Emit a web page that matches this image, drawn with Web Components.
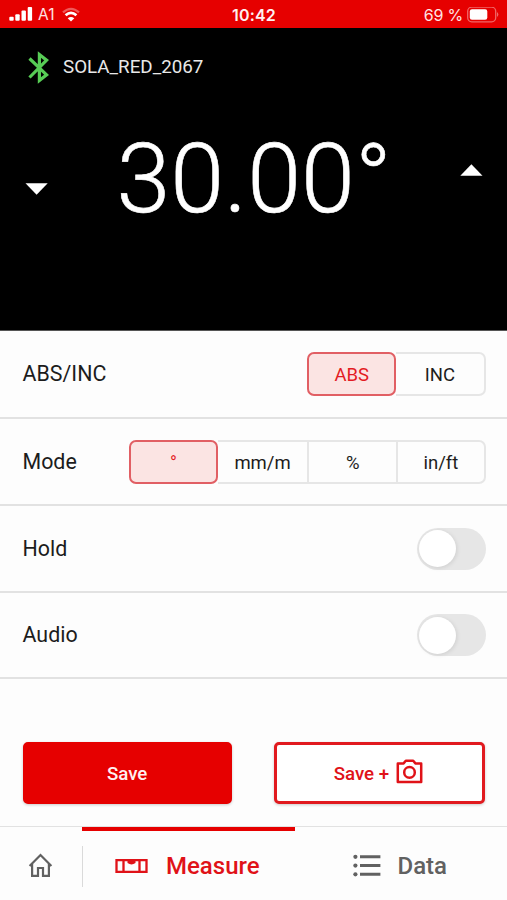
<!DOCTYPE html>
<html lang="en">
  <head>
    <meta charset="UTF-8" />
    <title>Measure</title>
    <style>
      body {
        margin: 0;
        background: #fdfdfd;
        font-family: Roboto, "Liberation Sans", sans-serif;
      }
    </style>
  </head>
  <body>
    <level-app></level-app>

    <script>
      // registers an element whose shadow root is cloned from a template
      function define(name, html, setup) {
        const template = document.createElement("template");
        template.innerHTML = html;

        customElements.define(
          name,
          class extends HTMLElement {
            constructor() {
              super();
              this.attachShadow({ mode: "open" });
              this.shadowRoot.appendChild(template.content.cloneNode(true));
            }

            connectedCallback() {
              if (setup) setup(this, this.shadowRoot);
            }
          }
        );
      }

      define(
        "status-bar",
        `
      <style>
        :host {
          display: grid;
          grid-template-columns: 1fr auto 1fr;
          align-items: center;
          height: 28px;
          padding: 2px 8px 0 9px;
          box-sizing: border-box;
          background: #e60000;
          color: #ffe3e3;
          font-family: Inter, Roboto, sans-serif;
          font-size: 16px;
          line-height: 20px;
        }
        div { display: flex; align-items: center; }
        svg { display: block; }
        .time { font-weight: 600; color: #fff0f0; letter-spacing: 0.2px; }
        .right { justify-content: flex-end; gap: 4px; }
        .right span { letter-spacing: -0.2px; }
        .a1 { margin: 0 7px 0 5px; font-size: 15.5px; }
      </style>
      <div>
        <svg width="24" height="16" viewBox="0 0 24 16" fill="#fff">
          <rect x="0.3" y="9.8" width="4.4" height="4" rx="1" />
          <rect x="6.3" y="7.2" width="4.4" height="6.6" rx="1" />
          <rect x="12.5" y="3.6" width="4.4" height="10.2" rx="1" />
          <rect x="18.7" y="0" width="4.4" height="13.8" rx="1" />
        </svg>
        <span class="a1">A1</span>
        <svg width="20" height="16" viewBox="0 0 20 16" fill="none">
          <path d="M2 5.4Q10 -1.8 18 5.4" stroke="#fff" stroke-opacity=".35" stroke-width="2.2" />
          <path d="M4.6 8.3Q10 3.5 15.4 8.3" stroke="#fff" stroke-width="2.8" />
          <path d="M10 14.6L6.7 11.2Q10 8.6 13.3 11.2Z" fill="#fff" />
        </svg>
      </div>
      <span class="time">10:42</span>
      <div class="right">
        <span>69 %</span>
        <svg width="32" height="16" viewBox="0 0 32 16">
          <rect x="0.7" y="0.2" width="28" height="14.6" rx="4" fill="none" stroke="#fff" stroke-opacity=".4" stroke-width="1.3" />
          <rect x="2.8" y="2.2" width="17.5" height="10.6" rx="2.2" fill="#fff" />
          <path d="M30.2 5Q32.4 7.5 30.2 10Z" fill="#fff" fill-opacity=".5" />
        </svg>
      </div>
    `
      );

      define(
        "angle-display",
        `
      <style>
        :host {
          display: block;
          height: 303px;
          padding: 22px 24px 0 25px;
          box-sizing: border-box;
          background: #000;
          color: #fff;
          border-bottom: 1px solid #555;
        }
        .device { display: flex; align-items: center; height: 34px; gap: 14px; padding-left: 3px; color: #e8e8e8; font-size: 18.8px; }
        .reading { display: flex; justify-content: space-between; height: 190px; }
        .value {
          font-size: 97px;
          font-weight: 300;
          line-height: 191px;
          white-space: pre;
          -webkit-text-stroke: 0.6px #fff;
        }
        svg { display: block; }
        .down { margin-top: 99px; }
        .up { margin-top: 80px; }
      </style>
      <div class="device">
        <svg width="21" height="34" viewBox="0 0 21 34" fill="none" stroke="#57cc55" stroke-width="3.2">
          <path d="M1.5 8.5L18.6 24.8L11.4 30.5V4.5L18.6 10.2L1.5 27.5" />
        </svg>
        <span><slot name="device"></slot></span>
      </div>
      <div class="reading">
        <svg class="down" width="23" height="12" viewBox="0 0 23 12"><path d="M.5 .3H22.7L11.6 11.7Z" fill="#fff" /></svg>
        <span class="value"><slot></slot></span>
        <svg class="up" width="23" height="12" viewBox="0 0 23 12"><path d="M.3 11.7H22.5L11.4 .3Z" fill="#fff" /></svg>
      </div>
    `
      );

      define(
        "setting-row",
        `
      <style>
        :host {
          display: flex;
          align-items: center;
          justify-content: space-between;
          height: 87px;
          padding: 0 21.5px 0 22.5px;
          box-sizing: border-box;
          border-bottom: 2px solid #e2e2e2;
          color: #1c1c1c;
          font-size: 21.4px;
        }
        .label { margin-top: -1px; }
      </style>
      <span class="label"><slot name="label"></slot></span>
      <slot></slot>
    `
      );

      define(
        "segment-group",
        `
      <style>
        :host { display: flex; height: 44px; font-size: 18.5px; }
        span {
          display: flex;
          align-items: center;
          justify-content: center;
          width: 89.2px;
          padding-top: 2px;
          box-sizing: border-box;
          border: 2px solid #e6e6e6;
          border-right: 0;
        }
        span:last-child { border-right: 2px solid #e6e6e6; border-radius: 0 7px 7px 0; }
        span.active {
          border: 2px solid #e15f64;
          border-radius: 7px;
          background: #fbe4e3;
          color: #e31b23;
        }
        span.active + span { border-left: 0; }
      </style>
    `,
        (host, root) => {
          if (root.querySelector("span")) return;
          host.getAttribute("options").split("|").forEach((option, i) => {
            const span = document.createElement("span");
            span.textContent = option;
            if (i === 0) span.className = "active";
            root.appendChild(span);
          });
        }
      );

      define(
        "toggle-switch",
        `
      <style>
        :host {
          display: flex;
          align-items: center;
          width: 69px;
          height: 42px;
          padding: 0 2px;
          box-sizing: border-box;
          border-radius: 21px;
          background: #e6e6e6;
        }
        i { width: 37px; height: 37px; border-radius: 50%; background: #fff; box-shadow: 1px 1px 4px rgba(0, 0, 0, 0.1); }
      </style>
      <i></i>
    `
      );

      define(
        "action-button",
        `
      <style>
        :host {
          display: flex;
          align-items: center;
          justify-content: center;
          gap: 7px;
          flex: 1;
          height: 62px;
          padding: 1px 2px 0 0;
          box-sizing: border-box;
          border: 3px solid #e11a1f;
          border-radius: 5px;
          background: #fff;
          color: #e01218;
          font-size: 18.7px;
          font-weight: 500;
          box-shadow: 0 1px 3px rgba(0, 0, 0, 0.2);
        }
        :host([filled]) { padding-right: 0; border-color: #e60000; background: #e60000; color: #fff0f0; }
      </style>
      <slot></slot>
    `
      );

      define(
        "tab-bar",
        `
      <style>
        :host {
          display: grid;
          grid-template-columns: 82px 212.5px 1fr;
          height: 74px;
          box-sizing: border-box;
          border-top: 1px solid #e2e2e2;
          font-size: 24px;
          font-weight: 500;
          color: #616161;
        }
        div { display: flex; align-items: center; padding-top: 5px; box-sizing: border-box; }
        svg { display: block; flex: none; }
        .home { padding: 3px 0 0 28px; }
        .measure {
          border-top: 4px solid #e60000;
          padding: 1px 0 0 33px;
          gap: 18px;
          color: #e01218;
          background: linear-gradient(#dadada, #dadada) left 15px / 1px 41px no-repeat;
        }
        .data { padding-left: 58px; gap: 17px; }
      </style>
      <div class="home">
        <svg width="25" height="26" viewBox="0 0 25 26" fill="none" stroke="#616161" stroke-width="2.2">
          <path d="M1.6 14L12.5 3L23.4 14M4.1 12V23.9H10V16H15V23.9H20.9V12" />
        </svg>
      </div>
      <div class="measure">
        <svg width="33" height="15" viewBox="0 0 33 15" fill="none" stroke="#e01218" stroke-width="2.3">
          <path d="M1.5 1.2H31.5V12.8H1.5ZM8.5 1.2V12.8M24.5 1.2V12.8" />
          <path d="M12.5 1.5H20.5V4Q16.5 6.8 12.5 4Z" fill="#e01218" stroke="none" />
        </svg>
        <span>Measure</span>
      </div>
      <div class="data">
        <svg width="28" height="24" viewBox="0 0 28 24" fill="#616161">
          <circle cx="2.4" cy="2.8" r="2.1" /><circle cx="2.4" cy="11.6" r="2.1" /><circle cx="2.4" cy="20.3" r="2.1" />
          <path d="M7 1.3H27.4V4.3H7ZM7 10.1H27.4V13.1H7ZM7 18.8H27.4V21.8H7Z" />
        </svg>
        <span>Data</span>
      </div>
    `
      );

      define(
        "level-app",
        `
      <style>
        :host { display: flex; flex-direction: column; width: 507px; height: 900px; overflow: hidden; }
        .first { height: 88px; }
        .last { height: 86px; }
        .actions { display: flex; gap: 42px; padding: 63px 22px 22px 22.5px; }
        svg { display: block; margin-top: -5px; }
      </style>
      <status-bar></status-bar>
      <angle-display><span slot="device">SOLA_RED_2067</span>30.00°</angle-display>
      <setting-row class="first">
        <span slot="label">ABS/INC</span>
        <segment-group options="ABS|INC"></segment-group>
      </setting-row>
      <setting-row>
        <span slot="label">Mode</span>
        <segment-group options="°|mm/m|%|in/ft"></segment-group>
      </setting-row>
      <setting-row>
        <span slot="label">Hold</span>
        <toggle-switch></toggle-switch>
      </setting-row>
      <setting-row class="last">
        <span slot="label">Audio</span>
        <toggle-switch></toggle-switch>
      </setting-row>
      <div class="actions">
        <action-button filled>Save</action-button>
        <action-button>
          <span>Save +</span>
          <svg width="27" height="25" viewBox="0 0 27 25" fill="none" stroke="#e01218" stroke-width="2.5" stroke-linejoin="round">
            <path d="M1.8 4.4H7.6L9.8 1.7H17.2L19.4 4.4H25.2V23H1.8Z" />
            <circle cx="13.5" cy="13.4" r="5.3" />
          </svg>
        </action-button>
      </div>
      <tab-bar></tab-bar>
    `
      );
    </script>
  </body>
</html>
